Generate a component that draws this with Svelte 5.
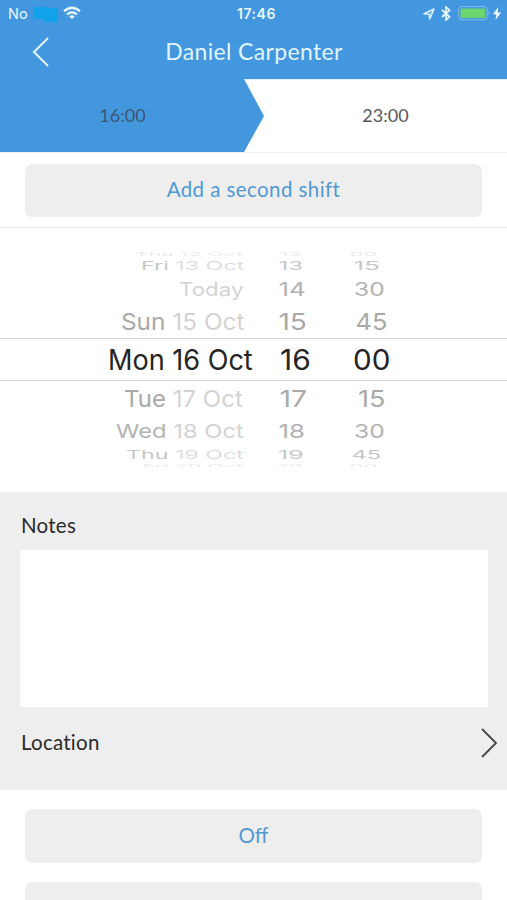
<script>
  // `w` is a label's drawn width, `r` the date's right edge; `sy` flattens rows towards the wheel's edges.
  const rows = [
    { h: 6, size: 23, sy: 0.22, dy: -1, tone: 'edge', day: 'Thu', date: '12 Oct', w: 108, r: 243, hour: ['12', 23, 291], min: ['00', 28, 364] },
    { h: 15, size: 23, sy: 0.5, dy: 1, tone: 'far', day: 'Fri', date: '13 Oct', w: 103, r: 244, hour: ['13', 25, 291], min: ['15', 26, 367] },
    { h: 32, size: 23, sy: 0.8, dy: 1, tone: 'mid', day: '', date: 'Today', w: 64, r: 243.5, hour: ['14', 27, 292], min: ['30', 31, 369.5] },
    { h: 33, size: 23, sy: 1, dy: 1, tone: 'near', day: 'Sun', date: '15 Oct', w: 123, r: 244, hour: ['15', 28, 293], min: ['45', 32, 371.5] },
    { h: 43, size: 28, sy: 1, dy: 0.5, tone: 'selected', day: 'Mon', date: '16 Oct', w: 145, r: 252.5, hour: ['16', 31, 295], min: ['00', 37, 372] },
    { h: 34, size: 23, sy: 1, dy: 1, tone: 'near', day: 'Tue', date: '17 Oct', w: 119, r: 243, hour: ['17', 27, 293], min: ['15', 27, 371.5] },
    { h: 32, size: 23, sy: 0.83, dy: 0.5, tone: 'mid', day: 'Wed', date: '18 Oct', w: 128, r: 244, hour: ['18', 27, 292], min: ['30', 31, 369.5] },
    { h: 15, size: 23, sy: 0.53, dy: 1, tone: 'far', day: 'Thu', date: '19 Oct', w: 118, r: 243.5, hour: ['19', 26, 291], min: ['45', 30, 366.5] },
    { h: 5, size: 23, sy: 0.22, dy: 1.5, tone: 'edge', day: 'Fri', date: '20 Oct', w: 100, r: 243, hour: ['20', 26, 289], min: ['00', 28, 364] }
  ];

  // Stretches a label to its width on the wheel.
  function fit(node, { w, sy }) {
    const natural = node.offsetWidth;
    node.style.transform = `scale(${w / natural}, ${sy})`;
  }
</script>

<div class="screen">
  <header>
    <div class="status">
      <div class="carrier">
        <span>No</span>
        <svg width="27" height="18" viewBox="0 0 27 18"><path d="M1 2h15v1h10v14H11v-3H1z" fill="#12a2ec" /></svg>
        <svg class="wifi" width="18" height="14" viewBox="0 0 18 14" fill="none" stroke="#f2fbff" stroke-width="2.3">
          <path d="M1 5.2Q9-1.8 17 5.2" /><path d="M4 8.5Q9 4.2 14 8.5" /><path d="M9 13L6.2 10.2Q9 8.3 11.8 10.2Z" fill="#f2fbff" stroke="none" />
        </svg>
      </div>
      <b>17:46</b>
      <div class="indicators">
        <svg width="12" height="12" viewBox="0 0 12 12"><path d="M1 5.8L11 1 6.8 11 6 6.2Z" fill="none" stroke="#d9f1ff" stroke-width="1.5" stroke-linejoin="round" /><path d="M6 6.2L11 1 6.8 11Z" fill="#d9f1ff" fill-opacity=".5" /></svg>
        <svg width="10" height="15" viewBox="0 0 10 15"><path d="M1 4l7.5 6.8L5 14V1l3.5 3.2L1 11" fill="none" stroke="#e8f8ff" stroke-width="1.7" /></svg>
        <svg width="33" height="15" viewBox="0 0 33 15"><rect x=".6" y=".6" width="28.5" height="13.2" rx="3" fill="none" stroke="#83bfe9" /><rect x="2.5" y="2.5" width="24.6" height="9.5" rx="1" fill="#6cd66e" /><path d="M30.5 5q2 2.2 0 4.6z" fill="#83bfe9" /></svg>
        <svg width="8" height="13" viewBox="0 0 8 13"><path d="M5.2 0L0 7.2h3.3L2.5 13 8 5.4H4.6z" fill="#f2fbff" /></svg>
      </div>
    </div>
    <div class="nav">
      <svg width="18" height="30" viewBox="0 0 18 30"><path d="M16 1L2 15l14 14" fill="none" stroke="#e4f7ff" stroke-width="2" /></svg>
      <h1>Daniel Carpenter</h1>
    </div>
  </header>

  <div class="tabs">
    <div class="tab start"><span>16:00</span></div>
    <div class="tab end"><span>23:00</span></div>
  </div>

  <div class="second"><button><span class="add">Add a second shift</span></button></div>

  <div class="picker">
    {#each rows as row}
      <div class="row {row.tone}" style="height:{row.h}px;font-size:{row.size}px">
        <div class="date" style="width:{row.r}px">
          <span class="label right" style="top:{row.dy}px" use:fit={{ w: row.w, sy: row.sy }}>{#if row.day}<i>{row.day}</i>&nbsp;{/if}{row.date}</span>
        </div>
        {#each [row.hour, row.min] as [text, w, x], n}
          <div class="num" style="margin-left:{n ? x - row.hour[2] - 60 : x - row.r - 30}px">
            <span class="label" style="top:{row.dy}px" use:fit={{ w, sy: row.sy }}>{text}</span>
          </div>
        {/each}
      </div>
    {/each}
  </div>

  <section>
    <label for="notes">Notes</label>
    <textarea id="notes"></textarea>
    <div class="location">
      <span>Location</span>
      <svg width="18" height="30" viewBox="0 0 18 30"><path d="M2 1l14 14L2 29" fill="none" stroke="#484848" stroke-width="1.9" /></svg>
    </div>
  </section>

  <div class="actions">
    <button><span>Off</span></button>
    <button aria-label="More"></button>
  </div>
</div>

<style>
  :global(body) { margin: 0; background: #fff; }
  * { box-sizing: border-box; }
  .screen { width: 507px; height: 900px; overflow: hidden; background: #fff; font-family: Lato, "Liberation Sans", sans-serif; color: #333; display: flex; flex-direction: column; }
  svg { display: block; flex: none; }
  header { height: 79px; flex: none; background: #4397df; }
  .status { height: 27px; display: grid; grid-template-columns: 1fr auto 1fr; align-items: center; padding: 0 6px 0 8px; font: 14.5px Inter, sans-serif; color: #e8f8ff; }
  .status b { font-size: 14px; font-weight: 600; letter-spacing: .5px; padding-left: 4px; }
  .carrier { display: flex; align-items: center; gap: 4px; }
  .wifi { margin-top: -2px; }
  .indicators { display: flex; align-items: center; justify-content: flex-end; gap: 6px; }
  .indicators svg:nth-child(1), .indicators svg:nth-child(2) { margin-left: -1px; margin-right: 1px; }
  .indicators svg:nth-child(3) { margin-top: -1px; }
  .indicators svg:nth-child(4) { margin-left: -4px; }
  .nav { height: 48px; display: grid; grid-template-columns: 33px 1fr 51px; align-items: center; }
  .nav svg { justify-self: end; margin-right: -17px; margin-top: 2px; }
  h1 { margin: 0; text-align: center; font-size: 23px; line-height: 48px; font-weight: 400; letter-spacing: .35px; color: #e0f5ff; padding-left: 19px; }
  .tabs { height: 74px; flex: none; display: flex; border-bottom: 1px solid #eee; border-top: 1px solid #e3f0fb; }
  .tab { display: flex; align-items: center; justify-content: center; font-size: 18px; color: #55585a; padding-bottom: 2px; }
  .start { width: 264px; margin-top: -1px; background: #4397df; clip-path: polygon(0 0, 244px 0, 264px 37px, 244px 100%, 0 100%); padding-right: 19px; padding-bottom: 1px; color: #3d5870; }
  .end { flex: 1; }
  .second { height: 75px; flex: none; padding: 10.5px 25px 0; border-bottom: 1px solid #e9e9e9; }
  button { display: block; width: 457px; height: 53.5px; padding: 0 0 2px; border: 0; border-radius: 7px; background: #eee; font: 20.5px Lato, sans-serif; color: #5199d2; }
  .add { letter-spacing: .42px; }
  .picker { height: 263.5px; flex: none; padding-top: 24px; font-family: Inter, "Liberation Sans", sans-serif; }
  .row { display: flex; align-items: center; overflow: hidden; white-space: nowrap; }
  .date { display: flex; justify-content: flex-end; flex: none; }
  .num { width: 60px; flex: none; display: flex; justify-content: center; }
  .label { position: relative; display: block; line-height: 1; flex: none; }
  .right { transform-origin: right center; }
  i { font-style: normal; }
  .near { color: #a9a9a9; } .near .date { color: #d3d3d3; } .near i { color: #a9a9a9; }
  .mid { color: #b2b2b2; } .mid .date { color: #d3d3d3; } .mid i { color: #b4b4b4; }
  .far { color: #c6c6c6; } .far .date { color: #dedede; } .far i { color: #c6c6c6; }
  .edge { color: #ebebeb; }
  .selected { color: #252525; border-top: 1px solid #d5d5d5; border-bottom: 1px solid #d5d5d5; }
  section { height: 298px; flex: none; background: #eee; padding: 0 19px 0 20px; color: #2a2a2a; font-size: 20.5px; letter-spacing: .25px; }
  label { display: block; height: 58px; padding-top: 9px; line-height: 49px; padding-left: 1px; }
  textarea { display: block; width: 468px; height: 157px; border: 0; resize: none; background: #fff; }
  .location { display: flex; align-items: center; justify-content: space-between; height: 73px; margin-right: -10px; padding-left: 1px; }
  .location span { padding-bottom: 2px; }
  .actions { padding: 19.5px 25px 0; display: flex; flex-direction: column; gap: 19.5px; }
  .actions button { flex: none; }
</style>
